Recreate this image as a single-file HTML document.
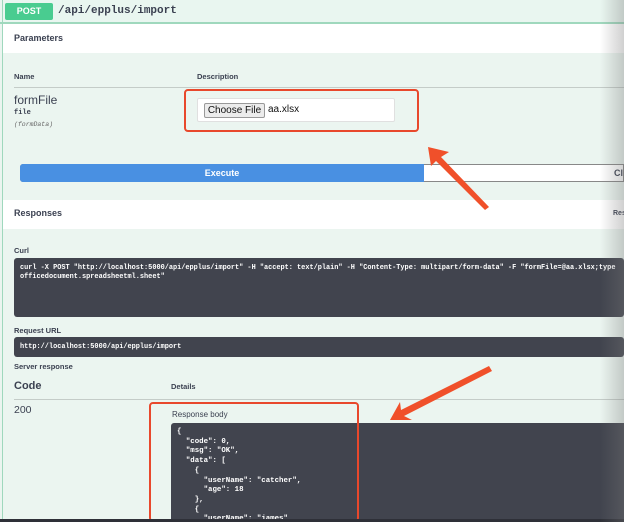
<!DOCTYPE html>
<html style="width:624px;height:522px;overflow:hidden"><head><meta charset="utf-8"><style>
*{margin:0;padding:0;box-sizing:border-box}
html,body{width:624px;height:522px;overflow:hidden}
body{background:#ebf5f0;font-family:"Liberation Sans",sans-serif;position:relative;color:#3b4151}
.a{position:absolute;white-space:pre}
.b{font-weight:bold}
.m{font-family:"Liberation Mono",monospace;font-weight:bold}
</style></head><body>
<div class="a" style="left:0;top:0;width:624px;height:23px;background:#e9f6f0"></div>
<div class="a" style="left:0;top:22px;width:624px;height:2px;background:#9fd8bd"></div>
<div class="a" style="left:2px;top:0;width:1px;height:522px;background:#9fd8bd"></div>
<div class="a b" style="left:5px;top:3px;width:48px;height:17px;background:#49cc90;color:#fff;font-size:9px;line-height:17px;text-align:center;border-radius:2px">POST</div>
<div class="a m" style="left:58px;top:5px;font-size:11px;color:#3b4151">/api/epplus/import</div>
<div class="a" style="left:3px;top:24px;width:621px;height:29px;background:#fff"></div>
<div class="a b" style="left:14px;top:33px;font-size:9px">Parameters</div>
<div class="a b" style="left:14px;top:72px;font-size:7.5px">Name</div>
<div class="a b" style="left:197px;top:72px;font-size:7.5px">Description</div>
<div class="a" style="left:14px;top:87px;width:610px;height:1px;background:#c4ccc8"></div>
<div class="a" style="left:14px;top:93px;font-size:12px">formFile</div>
<div class="a m" style="left:14px;top:109px;font-size:7px">file</div>
<div class="a" style="left:14px;top:121px;font-size:6.5px;font-style:italic;font-family:'Liberation Mono',monospace;color:#666">(formData)</div>
<div class="a" style="left:197px;top:98px;width:198px;height:24px;background:#fff;border:1px solid #e0e0e0;border-radius:2px"></div>
<div class="a" style="left:204px;top:103px;width:61px;height:15px;background:#ececec;border:1px solid #999;border-radius:2px;font-size:10px;line-height:13px;text-align:center;color:#111">Choose File</div>
<div class="a" style="left:268px;top:103px;font-size:10px;line-height:14px;color:#111">aa.xlsx</div>
<div class="a" style="left:184px;top:89px;width:235px;height:43px;border:2px solid #e8482c;border-radius:4px"></div>
<div class="a" style="left:20px;top:164px;width:604px;height:18px;border:1px solid #888;border-radius:3px 0 0 3px;background:#fff"></div>
<div class="a b" style="left:20px;top:164px;width:404px;height:18px;background:#4990e2;border-radius:3px 0 0 3px;color:#fff;font-size:9px;line-height:18px;text-align:center">Execute</div>
<div class="a b" style="left:614px;top:168px;font-size:9px">Cl</div>
<div class="a" style="left:3px;top:200px;width:621px;height:29px;background:#fff"></div>
<div class="a b" style="left:14px;top:208px;font-size:9px">Responses</div>
<div class="a b" style="left:613px;top:210px;font-size:7px">Res</div>
<div class="a b" style="left:14px;top:246px;font-size:7.5px">Curl</div>
<div class="a" style="left:14px;top:258px;width:610px;height:59px;background:#41444e;border-radius:3px"></div>
<div class="a m" style="left:20px;top:264px;font-size:6.9px;line-height:9px;color:#fff">curl -X POST "http://localhost:5000/api/epplus/import" -H "accept: text/plain" -H "Content-Type: multipart/form-data" -F "formFile=@aa.xlsx;type
officedocument.spreadsheetml.sheet"</div>
<div class="a b" style="left:14px;top:326px;font-size:7.5px">Request URL</div>
<div class="a" style="left:14px;top:337px;width:610px;height:20px;background:#41444e;border-radius:3px"></div>
<div class="a m" style="left:20px;top:343px;font-size:6.9px;color:#fff">http://localhost:5000/api/epplus/import</div>
<div class="a b" style="left:14px;top:362px;font-size:7.5px">Server response</div>
<div class="a b" style="left:14px;top:380px;font-size:11px">Code</div>
<div class="a b" style="left:171px;top:382px;font-size:7.5px">Details</div>
<div class="a" style="left:14px;top:399px;width:610px;height:1px;background:#c4ccc8"></div>
<div class="a" style="left:14px;top:404px;font-size:10.5px">200</div>
<div class="a" style="left:172px;top:410px;font-size:8px">Response body</div>
<div class="a" style="left:171px;top:423px;width:453px;height:99px;background:#41444e;border-radius:3px 0 0 0"></div>
<div class="a m" style="left:177px;top:428px;font-size:7.4px;line-height:9.7px;color:#fff">{
  "code": 0,
  "msg": "OK",
  "data": [
    {
      "userName": "catcher",
      "age": 18
    },
    {
      "userName": "james",
      "age": 20</div>
<div class="a" style="left:149px;top:402px;width:210px;height:120px;border:2px solid #e8482c;border-radius:4px"></div>
<div class="a" style="left:0;top:519px;width:624px;height:3px;background:#2e3038"></div>
<div class="a" style="left:600px;top:0;width:24px;height:522px;background:linear-gradient(90deg,rgba(120,120,120,0),rgba(120,120,120,.35))"></div>
<svg class="a" style="left:0;top:0" width="624" height="522">
<polygon points="428,147 449,152 441,157 489,207 485,210 436,161 431,166" fill="#f0502a"/>
<polygon points="390,420 400,402 401,410 489,366 492,371 404,416 412,420" fill="#f0502a"/>
</svg>
</body></html>
